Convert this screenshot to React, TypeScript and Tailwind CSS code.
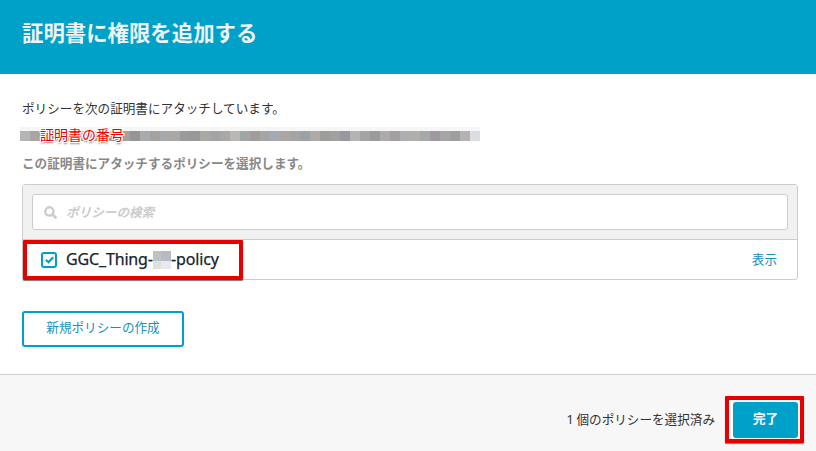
const CENSORED = [
  '#b5b5b5', '#a8a5a4', '#b1b0af', '#a6a5a5', '#a09f9e', '#acabaa', '#a5a4a3', '#afadac', '#a9a8a7', '#a3a2a2',
  '#a3a1a1', '#969594', '#a9aaae', '#a5a19e', '#a6a8ab', '#aba7a5', '#999a9c', '#989898', '#aaa8a5', '#a3a4a6',
  '#aaa8a6', '#b8b7b6', '#a0a5a5', '#a09d9c', '#a5a5a4', '#a5a9b1', '#aaa6a3', '#a5a4a3', '#9ba2a7', '#aca9a6',
  '#9e9d9c', '#a1a1a0', '#9997a0', '#b4b4b4', '#a6a3a3', '#999c9b', '#adabad', '#a19f9f', '#aeaeb0', '#b2aeac',
  '#a7a8aa', '#9e999e', '#a5a5a5', '#a09f9f', '#b7b2b2', '#dcdde2',
];

function Header() {
  return (
    <header className="flex h-[74px] items-center bg-[#00a1c9] px-[22px] pb-[11px]">
      <h1 className="text-[21.4px] leading-8 font-bold whitespace-nowrap text-[#eef3f5]">証明書に権限を追加する</h1>
    </header>
  );
}

function CertificateNumber() {
  return (
    <div className="relative mt-[9px] -ml-[2px] h-[14px] w-[460px]">
      <div className="flex h-full">
        {CENSORED.map((color, i) => (
          <span key={i} className="h-full w-[10px] border-t-4 border-[#f6f6f6]" style={{ backgroundColor: color }} />
        ))}
      </div>
      <span className="absolute -top-[3px] left-[20px] text-[14px] leading-5 whitespace-nowrap text-[#f00000] [text-shadow:1px_0_0_#fff,-1px_0_0_#fff,0_1px_0_#fff,0_-1px_0_#fff,1px_1px_0_#fff,-1px_-1px_0_#fff,1px_-1px_0_#fff,-1px_1px_0_#fff,0_2px_2px_#666]">
        証明書の番号
      </span>
    </div>
  );
}

function PolicyList() {
  return (
    <section className="mt-[11px] h-24 rounded-t-[3px] rounded-br-[3px] border border-[#cccccc] bg-white">
      <div className="h-[55px] border-b border-[#cccccc] bg-[#f1f1f1] p-[9px]">
        <div className="flex h-9 items-center rounded-[3px] border border-[#cccccc] bg-white pl-[11px]">
          <svg className="size-[13px] text-[#cccccc]" viewBox="0 0 13 13" fill="none" stroke="currentColor">
            <circle cx="5.4" cy="5.4" r="4.1" strokeWidth="2.4" />
            <path d="M8.6 8.6 11.5 11.5" strokeWidth="2.8" strokeLinecap="round" />
          </svg>
          <span className="ml-[9px] text-[12.6px] font-bold text-[#cccccc] italic">ポリシーの検索</span>
        </div>
      </div>
      <div className="relative flex h-[39px] items-center pr-5 pl-[18px]">
        <span className="flex size-4 items-center justify-center rounded-[3px] border-2 border-[#00a1c9]">
          <svg className="h-2 w-[9px]" viewBox="0 0 9 8" fill="none" stroke="#00a1c9" strokeWidth="2.2">
            <path d="M.8 3.8 3.5 6.3 8.2 1.3" />
          </svg>
        </span>
        <span className="ml-[9px] flex items-center font-['Noto_Sans'] text-[16px] leading-5 tracking-[-0.15px] text-[#16242c] [-webkit-text-stroke:0.25px_#16242c]">
          <span className="relative -top-px w-[87px] whitespace-nowrap">GGC_Thing-</span>
          <span className="grid h-[18px] w-[18px] grid-cols-[8px_10px] grid-rows-[10px_8px]">
            <span className="bg-[#bfc2c4]" />
            <span className="bg-[#b6bac2]" />
            <span className="bg-[#dfe0e0]" />
            <span className="bg-[#e8e9ee]" />
          </span>
          <span className="relative -top-px">-policy</span>
        </span>
        <span className="ml-auto pb-px text-[12.6px] text-[#1690bb]">表示</span>
        <div className="absolute top-0 left-0 h-10 w-[220px] rounded-[1px] border-4 border-[#e60000] shadow-[0_1px_1px_#777]" />
      </div>
    </section>
  );
}

function Footer() {
  return (
    <footer className="flex h-[77px] items-start justify-end border-t border-[#cccccc] bg-[#f7f7f7] pt-[21px] pr-3">
      <span className="mt-[13px] mr-[10px] text-[12.6px] leading-5 text-[#333333]">
        <span className="font-['Noto_Sans']">1</span> 個のポリシーを選択済み
      </span>
      <div className="h-[47px] w-[79px] rounded-[1px] border-4 border-[#e60000] bg-white pt-[2px] pl-1 shadow-[0_1px_1px_#777]">
        <button className="flex h-9 w-[65px] items-center justify-center rounded-[3px] bg-[#00a1c9] pb-[3px] text-[12.6px] font-bold text-white">
          完了
        </button>
      </div>
    </footer>
  );
}

export default function App() {
  return (
    <div className="flex h-[451px] w-[816px] flex-col overflow-hidden bg-white font-['Noto_Sans_CJK_JP',sans-serif]">
      <Header />
      <main className="h-[300px] px-[22px] pt-[24px] pr-[18px]">
        <p className="text-[12.6px] leading-5 text-[#333333]">ポリシーを次の証明書にアタッチしています。</p>
        <CertificateNumber />
        <p className="mt-[12px] text-[12.6px] leading-5 font-bold text-[#888888]">この証明書にアタッチするポリシーを選択します。</p>
        <PolicyList />
        <button className="mt-[31px] flex h-9 w-[162px] items-center justify-center rounded-[3px] border-2 border-[#00a1c9] pb-[3px] text-[12.6px] text-[#1690bb]">
          新規ポリシーの作成
        </button>
      </main>
      <Footer />
    </div>
  );
}
